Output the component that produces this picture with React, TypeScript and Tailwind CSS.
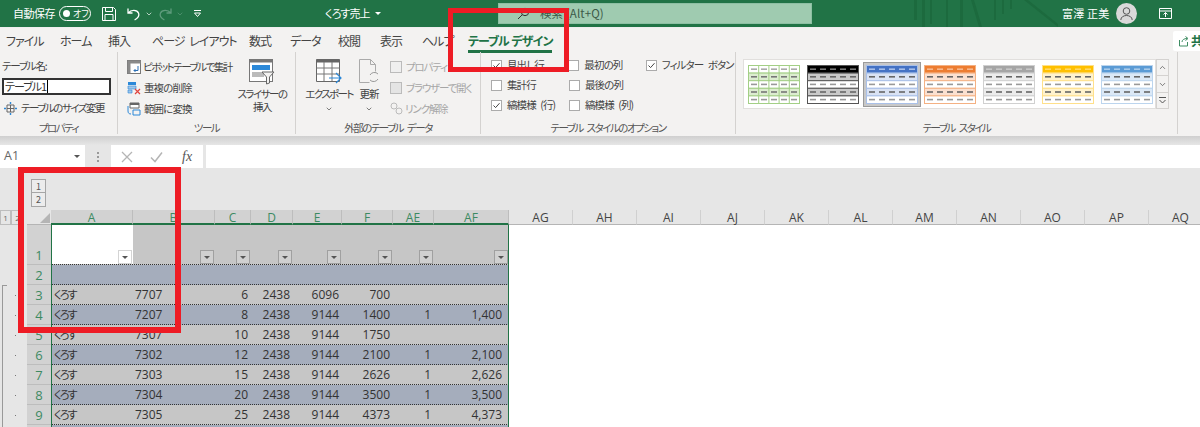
import { ChevronDown, ChevronUp } from "lucide-react";

const tabs: [string, number][] = [
  ["ファイル", 54],
  ["ホーム", 48],
  ["挿入", 44],
  ["ページ レイアウト", 97],
  ["数式", 41],
  ["データ", 48],
  ["校閲", 42],
  ["表示", 42],
  ["ヘルプ", 46],
];

const columns: [string, number][] = [
  ["A", 82],
  ["B", 82],
  ["C", 36],
  ["D", 42],
  ["E", 49],
  ["F", 51],
  ["AE", 41],
  ["AF", 75],
];

const emptyCols = ["AG", "AH", "AI", "AJ", "AK", "AL", "AM", "AN", "AO", "AP", "AQ"];

const rows = [
  ["くろす", "7707", "6", "2438", "6096", "700", "", ""],
  ["くろす", "7207", "8", "2438", "9144", "1400", "1", "1,400"],
  ["くろす", "7307", "10", "2438", "9144", "1750", "", ""],
  ["くろす", "7302", "12", "2438", "9144", "2100", "1", "2,100"],
  ["くろす", "7303", "15", "2438", "9144", "2626", "1", "2,626"],
  ["くろす", "7304", "20", "2438", "9144", "3500", "1", "3,500"],
  ["くろす", "7305", "25", "2438", "9144", "4373", "1", "4,373"],
];

const styles = [
  { head: "#ffffff", a: "#dcecd0", b: "#ffffff", line: "#a3cf86", dash: "#777777", headDash: "#aaaaaa", grid: true },
  { head: "#000000", a: "#c9c9c9", b: "#ffffff", line: "#555555", dash: "#666666", headDash: "#777777" },
  { head: "#4472c4", a: "#d9e2f3", b: "#ffffff", line: "#a9c0e8", dash: "#666666", headDash: "#a8bfe8" },
  { head: "#ed7d31", a: "#fbe0d0", b: "#ffffff", line: "#f4b183", dash: "#666666", headDash: "#f6b88e" },
  { head: "#a5a5a5", a: "#ececec", b: "#ffffff", line: "#d0d0d0", dash: "#666666", headDash: "#c8c8c8" },
  { head: "#ffc000", a: "#fff2cc", b: "#ffffff", line: "#ffe08a", dash: "#666666", headDash: "#ffd966" },
  { head: "#5b9bd5", a: "#dbe8f6", b: "#ffffff", line: "#bcd5ee", dash: "#666666", headDash: "#a9cbea" },
];

function StyleThumb({ s }: { s: (typeof styles)[number] }) {
  return (
    <svg width="52" height="39" viewBox="0 0 52 39" className="shrink-0">
      {[0, 1, 2, 3, 4].map((r) => (
        <g key={r}>
          <rect
            x="0.5"
            y={0.5 + r * 7.6}
            width="51"
            height="7.6"
            fill={r === 0 ? s.head : r % 2 ? s.a : s.b}
            stroke={s.line}
          />
          {[0, 1, 2, 3, 4].map((c) => (
            <rect
              key={c}
              x={3 + c * 10}
              y={3.4 + r * 7.6}
              width="6"
              height="1.6"
              fill={r === 0 ? s.headDash : r % 2 ? s.dash : "#999999"}
            />
          ))}
        </g>
      ))}
      {s.grid &&
        [1, 2, 3, 4].map((c) => (
          <path key={c} d={`M${0.5 + c * 10.2} 0v38.5`} stroke={s.line} fill="none" />
        ))}
    </svg>
  );
}

function Check({ on, label, w }: { on?: boolean; label: string; w: string }) {
  return (
    <div className={`flex h-[20px] items-center gap-[5px] ${w}`}>
      <span className="flex h-[11px] w-[11px] shrink-0 items-center justify-center border border-[#ababab] bg-white">
        {on && (
          <svg width="9" height="9" viewBox="0 0 9 9">
            <path d="M1.5 4.500 3.600 6.600 7.500 2.200" fill="none" stroke="#444" strokeWidth="1" />
          </svg>
        )}
      </span>
      <span className="whitespace-nowrap">{label}</span>
    </div>
  );
}

function GroupLabel({ children }: { children: React.ReactNode }) {
  return (
    <div className="absolute bottom-[-1px] left-0 right-0 whitespace-nowrap text-center leading-[14px] tracking-[-1.500px] text-[#555]">
      {children}
    </div>
  );
}

function FilterButton({ light }: { light?: boolean }) {
  return (
    <span
      className={`flex h-[14px] w-[14px] items-center justify-center border ${
        light ? "border-[#d4d4d4] bg-white" : "border-[#a0a0a0] bg-[#d0d0d0]"
      }`}
    >
      <span className="h-0 w-0 border-x-[3px] border-t-[3px] border-x-transparent border-t-[#555]" />
    </span>
  );
}

export default function App() {
  return (
    <div className="relative h-[427px] w-[1200px] overflow-hidden bg-white font-['Noto_Sans_CJK_JP','Noto_Sans',sans-serif] text-[11px] text-[#444] [font-feature-settings:'palt']">
      {/* title bar */}
      <div className="relative flex h-[27px] items-center bg-[#217346] text-[12px] text-white">
        <span className="ml-[13px] w-[45px] whitespace-nowrap text-[11px] tracking-[-.5px]">自動保存</span>
        <span className="ml-[1px] flex h-[15px] w-[32px] items-center rounded-full border border-white pl-[3px]">
          <span className="h-[7px] w-[7px] rounded-full bg-white" />
          <span className="ml-[3px] text-[9px] leading-none">オフ</span>
        </span>
        <svg width="16" height="16" viewBox="0 0 16 16" className="ml-[10px]" fill="none" stroke="#fff">
          <path d="M1.500 1.500h11l2 2v11h-13zM4.500 1.500v4h7v-4M4 14.500v-6h8v6" />
        </svg>
        <svg width="16" height="16" viewBox="0 0 16 16" className="ml-[9px]" fill="none" stroke="#fff" strokeWidth="1.300">
          <path d="M2 2.500v4.500h4.500M2.300 7C5 3.500 11 3.500 12.600 7.300c1 2.700-.8 5-4 6.700" />
        </svg>
        <ChevronDown size={8} className="ml-[3px]" />
        <svg width="16" height="16" viewBox="0 0 16 16" className="ml-[4px]" fill="none" stroke="#5f9c7d" strokeWidth="1.300">
          <path d="M14 2.500v4.500H9.500M13.700 7C11 3.500 5 3.500 3.400 7.300c-1 2.700.8 5 4 6.700" />
        </svg>
        <ChevronDown size={8} className="ml-[3px] text-[#5f9c7d]" />
        <svg width="9" height="9" viewBox="0 0 9 9" className="ml-[9px]" fill="none" stroke="#fff">
          <path d="M1 1.500h7M1.500 4h6L4.500 7.500z" />
        </svg>
        <span className="ml-[123px] w-[41px] whitespace-nowrap text-[11px] tracking-[-.9px]">くろす売上</span>
        <span className="ml-[9px] h-0 w-0 border-x-[3px] border-t-[3px] border-x-transparent border-t-white" />
        <div className="ml-[117px] flex h-[21px] w-[314px] items-center border border-[#8dbfa3] bg-[#9fcbb0] pl-[18px] text-[11.500px] text-[#3c5a48]">
          <svg width="13" height="13" viewBox="0 0 13 13" fill="none" stroke="#333" className="shrink-0">
            <circle cx="8" cy="5" r="3.700" />
            <path d="M5.300 7.700 1 12" />
          </svg>
          <span className="ml-[10px] whitespace-nowrap tracking-[.1px]">検索 (Alt+Q)</span>
        </div>
        <svg width="150" height="27" viewBox="0 0 150 27" className="absolute left-[910px] top-0" fill="#1c6a3e">
          <path d="M4 0h3v20H4zM12 0h3v27h-3zM20 0h2v24h-2zM36 0h2v27h-2zM50 0h3v27h-3zM64 0l8 27h-3L61 0zM84 0h2v20h-2zM92 0h2v14h-2zM100 0h2v9h-2zM118 0l30 24v3L114 0z" />
        </svg>
        <span className="relative ml-[250px] w-[46px] whitespace-nowrap text-[11px] tracking-[.2px]">富澤 正美</span>
        <span className="relative ml-[8px] flex h-[21px] w-[21px] items-center justify-center rounded-full bg-[#d9d9d9]">
          <svg width="15" height="15" viewBox="0 0 15 15" fill="none" stroke="#555">
            <circle cx="7.500" cy="5" r="3.300" />
            <path d="M1.800 14c0-6 11.400-6 11.400 0" />
          </svg>
        </span>
        <svg width="13" height="11" viewBox="0 0 13 11" className="relative ml-[22px]" fill="none" stroke="#fff">
          <path d="M.5.500h12v10H.5zM.5 3h12" />
          <path d="M6.500 9V4.500M4.500 6.500l2-2 2 2" />
        </svg>
      </div>

      {/* tab row */}
      <div className="relative flex h-[25px] items-center border-t border-[#eee] bg-[#f3f2f1] text-[12px] tracking-[-1px] text-[#444] [word-spacing:3px]">
        {tabs.map(([name, w]) => (
          <span key={name} style={{ width: w }} className="whitespace-nowrap pl-[6px] pt-[2px]">
            {name}
          </span>
        ))}
        <span className="relative ml-[6px] flex h-[25px] flex-col items-center justify-center whitespace-nowrap pt-[2px] text-[12px] font-bold text-[#217346] [word-spacing:1px]">
          テーブル デザイン
          <span className="absolute bottom-0 left-0 right-0 h-[2.500px] bg-[#217346]" />
        </span>
        <span className="absolute right-0 top-[3px] flex h-[20px] w-[27px] items-center gap-[2px] overflow-hidden rounded-l-[2px] bg-white pl-[6px] font-bold whitespace-nowrap text-[#217346]">
          <svg width="10" height="11" viewBox="0 0 10 11" className="shrink-0" fill="none" stroke="#3f8d63">
            <path d="M.5 4v6h8V6M3 6c0-2 2-3.500 5-3.500M6.500.5 9 2.500 6.500 4.500" />
          </svg>
          共有
        </span>
      </div>

      {/* ribbon */}
      <div className="flex h-[84px] bg-[#f3f2f1] pb-[2px] text-[10.500px] leading-[14px] tracking-[-.9px] text-[#444] [word-spacing:3px]">
        {/* プロパティ */}
        <div className="relative w-[118px] shrink-0 border-r border-[#d4d2d0] pl-[2px] pt-[7px]">
          <div className="tracking-[-1.200px]">テーブル名:</div>
          <div className="mt-[5px] flex h-[17px] w-[109px] items-center border-2 border-[#333] bg-white pl-[1px] text-[11px] leading-none tracking-[-1px] text-[#333]">
            テーブル1<span className="ml-[1px] h-[13px] w-px bg-black" />
          </div>
          <div className="mt-[6px] flex items-center gap-[4px] pl-[2px]">
            <svg width="13" height="13" viewBox="0 0 13 13" fill="none" stroke="#666" className="shrink-0">
              <path d="M3 3h7v7H3zM3 6.500h7M6.500 3v7" />
              <path d="M6.500 0v2M6.500 11v2M0 6.500h2M11 6.500h2" stroke="#2b88d8" strokeWidth="1.400" />
            </svg>
            <span className="whitespace-nowrap tracking-[-1.500px]">テーブルのサイズ変更</span>
          </div>
          <GroupLabel>プロパティ</GroupLabel>
        </div>

        {/* ツール */}
        <div className="relative flex w-[178px] shrink-0 border-r border-[#d4d2d0] pl-[9px] pt-[7px]">
          <div className="flex w-[110px] flex-col gap-[6px]">
            <div className="flex h-[15px] items-center gap-[2px] whitespace-nowrap tracking-[-1.500px]">
              <svg width="14" height="14" viewBox="0 0 14 14" className="shrink-0">
                <rect x=".5" y=".5" width="13" height="13" fill="#fff" stroke="#777" />
                <path d="M.5.500h13v3H.5zM.5.500h3v13h-3z" fill="#8a8a8a" />
                <path d="M11 6v4.500H7M8.500 9 7 10.500 8.500 12" fill="none" stroke="#2b6fb5" />
              </svg>
              ピボットテーブルで集計
            </div>
            <div className="flex h-[15px] items-center gap-[3px] whitespace-nowrap">
              <svg width="14" height="14" viewBox="0 0 14 14" className="shrink-0">
                <path d="M1 1h8v3H1z" fill="#2b88d8" />
                <path d="M1 5h8v3H1zM1 9h4v3H1z" fill="#9ec7ea" stroke="#2b88d8" strokeWidth=".6" />
                <path d="M8 8l5 5M13 8l-5 5" stroke="#e0443e" strokeWidth="1.200" />
              </svg>
              重複の削除
            </div>
            <div className="flex h-[15px] items-center gap-[3px] whitespace-nowrap">
              <svg width="14" height="14" viewBox="0 0 14 14" fill="none" className="shrink-0">
                <path d="M3 1h9v5H3z" fill="#fff" stroke="#666" />
                <path d="M3 1h9v2H3z" fill="#666" />
                <path d="M6 8h7v5H6z" stroke="#2b88d8" />
                <path d="M1 4v5c0 2 1 3 3 3" stroke="#2b88d8" />
              </svg>
              範囲に変換
            </div>
          </div>
          <div className="flex w-[50px] flex-col items-center">
            <svg width="26" height="26" viewBox="0 0 26 26" className="shrink-0">
              <rect x=".5" y=".5" width="23" height="22" fill="#fff" stroke="#777" />
              <path d="M.5.500h23v3H.5z" fill="#777" />
              <rect x="3" y="6" width="18" height="5" fill="#2b88d8" />
              <rect x="3" y="13" width="12" height="5" fill="#bbb" />
              <path d="M13 13h12l-4.500 5v6l-3 1v-7z" fill="#f3f2f1" stroke="#666" />
            </svg>
            <div className="mt-[2px] whitespace-nowrap text-center leading-[13px] tracking-[-1.500px]">
              スライサーの
              <br />
              挿入
            </div>
          </div>
          <GroupLabel>ツール</GroupLabel>
        </div>

        {/* 外部のテーブル データ */}
        <div className="relative flex w-[185px] shrink-0 border-r border-[#d4d2d0] pl-[7px] pt-[7px]">
          <div className="flex w-[52px] flex-col items-center">
            <svg width="26" height="25" viewBox="0 0 26 25" fill="none" className="shrink-0">
              <path d="M.5.500h23v22H.5z" fill="#fff" stroke="#666" />
              <path d="M.5.500h23v3H.5z" fill="#666" />
              <path d="M.5 9h23M.5 15h23M8 3v19M16 3v19" stroke="#777" />
              <path d="M13 19h12M20 14l5 5-5 5" stroke="#2b88d8" strokeWidth="1.200" />
            </svg>
            <div className="mt-[3px] whitespace-nowrap leading-[13px] tracking-[-1.600px]">エクスポート</div>
            <ChevronDown size={8} className="mt-[5px]" />
          </div>
          <div className="ml-[1px] flex w-[26px] flex-col items-center">
            <svg width="24" height="25" viewBox="0 0 24 25" fill="none" stroke="#aaa" className="shrink-0">
              <path d="M2.500.5h11l5 5v7M13.500.5v5h5M2.500.5v23h10" />
              <path d="M21 15a5 5 0 0 0-8 1M13 21a5 5 0 0 0 8-1" stroke="#999" />
            </svg>
            <div className="mt-[3px] whitespace-nowrap leading-[13px]">更新</div>
            <ChevronDown size={8} className="mt-[5px]" />
          </div>
          <div className="ml-[8px] flex flex-col gap-[6px] whitespace-nowrap tracking-[-1.200px] text-[#a6a6a6]">
            <div className="flex h-[15px] items-center gap-[4px]">
              <span className="h-[12px] w-[12px] border border-[#bbb] bg-[#efefef]" />
              プロパティ
            </div>
            <div className="flex h-[15px] items-center gap-[4px]">
              <span className="h-[12px] w-[12px] border border-[#bbb] bg-[#e4e4e4]" />
              ブラウザーで開く
            </div>
            <div className="flex h-[15px] items-center gap-[2px]">
              <svg width="13" height="13" viewBox="0 0 13 13" fill="none" stroke="#bbb">
                <circle cx="4" cy="4" r="3" />
                <circle cx="9" cy="9" r="3" />
              </svg>
              リンク解除
            </div>
          </div>
          <GroupLabel>外部のテーブル データ</GroupLabel>
        </div>

        {/* テーブル スタイルのオプション */}
        <div className="relative w-[255px] shrink-0 border-r border-[#d4d2d0] pl-[10px] pt-[3px]">
          <div className="flex">
            <Check on label="見出し行" w="w-[78px]" />
            <Check label="最初の列" w="w-[78px]" />
            <Check on label="フィルター ボタン" w="w-[90px]" />
          </div>
          <div className="flex">
            <Check label="集計行" w="w-[78px]" />
            <Check label="最後の列" w="w-[78px]" />
          </div>
          <div className="flex">
            <Check on label="縞模様 (行)" w="w-[78px]" />
            <Check label="縞模様 (列)" w="w-[78px]" />
          </div>
          <GroupLabel>テーブル スタイルのオプション</GroupLabel>
        </div>

        {/* テーブル スタイル */}
        <div className="relative w-[442px] shrink-0 border-r border-[#d4d2d0] pl-[7px] pt-[7px]">
          <div className="flex h-[50px] w-[426px]">
            <div className="flex h-[50px] w-[413px] items-center gap-[6.800px] border border-[#e1dfdd] bg-white pl-[4px]">
              {styles.map((s, i) =>
                i === 2 ? (
                  <span
                    key={s.head}
                    className="mx-[-3px] flex h-[45px] w-[58px] shrink-0 items-center justify-center border border-[#9a9a9a] bg-[#c8c8c8]"
                  >
                    <StyleThumb s={s} />
                  </span>
                ) : (
                  <StyleThumb key={s.head + i} s={s} />
                ),
              )}
            </div>
            <div className="flex w-[13px] flex-col text-[#555]">
              <span className="flex h-[17px] items-center justify-center border border-[#d4d2d0] bg-[#f3f2f1]">
                <ChevronUp size={9} />
              </span>
              <span className="flex h-[16px] items-center justify-center border-x border-[#d4d2d0] bg-[#f3f2f1]">
                <ChevronDown size={9} />
              </span>
              <span className="flex h-[17px] items-center justify-center border border-[#d4d2d0] bg-[#f3f2f1]">
                <svg width="9" height="9" viewBox="0 0 9 9" fill="none" stroke="#555">
                  <path d="M1 1.500h7M1.500 4 4.500 7 7.500 4" />
                </svg>
              </span>
            </div>
          </div>
          <GroupLabel>テーブル スタイル</GroupLabel>
        </div>
      </div>

      {/* ribbon shadow + formula bar */}
      <div className="h-[9px] bg-gradient-to-b from-[#cfcfcf] to-[#e6e6e6]" />
      <div className="flex h-[23px] items-stretch bg-[#e6e6e6] text-[#666]">
        <div className="flex w-[85px] items-center justify-between bg-white pl-[4px] pr-[5px] font-['Open_Sans',sans-serif] text-[12.500px]">
          A1
          <span className="h-0 w-0 border-x-[3px] border-t-[3px] border-x-transparent border-t-[#555]" />
        </div>
        <div className="flex w-[26px] flex-col items-center justify-center gap-[2px]">
          <span className="h-[2px] w-[2px] bg-[#999]" />
          <span className="h-[2px] w-[2px] bg-[#999]" />
          <span className="h-[2px] w-[2px] bg-[#999]" />
        </div>
        <div className="flex w-[92px] items-center bg-white pl-[10px]">
          <svg width="12" height="12" viewBox="0 0 12 12" stroke="#b5b5b5" strokeWidth="1.300" fill="none">
            <path d="M1 1l10 10M11 1 1 11" />
          </svg>
          <svg width="13" height="12" viewBox="0 0 13 12" stroke="#b5b5b5" strokeWidth="1.500" fill="none" className="ml-[17px]">
            <path d="M1 6.500 5 10.500 12 1.500" />
          </svg>
          <span className="ml-[19px] font-['Liberation_Serif',serif] text-[14px] italic leading-none text-[#555]">
            fx
          </span>
        </div>
        <div className="ml-[3px] flex-1 bg-white" />
      </div>

      {/* outline level buttons */}
      <div className="flex h-[42px] flex-col bg-[#e6e6e6] pl-[31px] pt-[11px] text-[9px] leading-none text-[#555]">
        <span className="flex h-[14px] w-[15px] items-center justify-center border border-[#a6a6a6] bg-[#ececec]">1</span>
        <span className="mt-[-1px] flex h-[15px] w-[15px] items-center justify-center border border-[#a6a6a6] bg-[#ececec]">2</span>
      </div>

      {/* column headers */}
      <div className="flex h-[15px] bg-[#e6e6e6] font-['Open_Sans',sans-serif] text-[12px] leading-[15px]">
        <div className="flex w-[27px] shrink-0 items-stretch text-[8px] text-[#666]">
          <span className="flex w-[11px] items-center justify-center border border-[#bdbdbd]">1</span>
          <span className="flex w-[13px] items-center justify-center border border-[#bdbdbd]">2</span>
        </div>
        <div className="flex w-[24px] shrink-0 items-end justify-end border-b border-[#b5b5b5] pb-[1px] pr-[1px]">
          <span className="h-0 w-0 border-b-[10px] border-l-[10px] border-b-[#b5b5b5] border-l-transparent" />
        </div>
        {columns.map(([c, w]) => (
          <div
            key={c}
            style={{ width: w }}
            className="shrink-0 border-b-2 border-r border-b-[#217346] border-r-[#bdbdbd] bg-[#d2d2d2] text-center text-[#3d8a62]"
          >
            {c}
          </div>
        ))}
        {emptyCols.map((c) => (
          <div
            key={c}
            className="w-[64px] shrink-0 border-b border-r border-b-[#b5b5b5] border-r-[#d0d0d0] text-center text-[#444]"
          >
            {c}
          </div>
        ))}
      </div>

      {/* sheet */}
      <div className="relative flex">
        {/* outline gutter */}
        <div className="relative w-[27px] shrink-0 bg-[#e6e6e6]">
          <div className="h-[60px]" />
          <div className="ml-[2px] h-[5px] w-[5px] border-l border-t border-[#999]" />
          {rows.map((_, i) => (
            <div key={i} className="relative h-[20px]">
              <span className="absolute left-[15px] top-[5px] h-px w-px bg-[#777]" />
            </div>
          ))}
          <div className="absolute bottom-0 left-[2px] top-[65px] w-px bg-[#999]" />
        </div>
        {/* row headers */}
        <div className="w-[24px] shrink-0 bg-[#d2d2d2] text-center font-['Open_Sans',sans-serif] text-[13px] text-[#3d8a62]">
          <div className="flex h-[40px] items-end justify-center border-b border-[#bdbdbd] leading-[17px]">1</div>
          {[2, 3, 4, 5, 6, 7, 8, 9].map((n) => (
            <div key={n} className="h-[20px] border-b border-[#bdbdbd] leading-[21px]">
              {n}
            </div>
          ))}
        </div>
        {/* table */}
        <div className="relative w-[458px] shrink-0 font-['Open_Sans','Noto_Sans_CJK_JP',sans-serif] text-[12px] leading-[19px] text-[#333]">
          <div className="flex h-[40px] border-b border-dotted border-[#333] bg-[#c6c6c6]">
            {columns.map(([c, w], i) => (
              <div
                key={c}
                style={{ width: w }}
                className={`flex shrink-0 items-end justify-end pr-[1px] ${i === 0 ? "bg-white" : ""}`}
              >
                <FilterButton light={i === 0} />
              </div>
            ))}
          </div>
          <div className="h-[20px] border-b border-dotted border-[#333] bg-[#a5adbc]" />
          {rows.map((r, i) => (
            <div
              key={i}
              className={`flex h-[20px] border-b border-dotted border-[#333] ${i % 2 ? "bg-[#a5adbc]" : "bg-[#c6c6c6]"}`}
            >
              {columns.map(([c, w], j) => (
                <div
                  key={c}
                  style={{ width: w }}
                  className={`shrink-0 whitespace-nowrap ${
                    j === 0
                      ? "pl-[3px] text-[11px] tracking-[-1.800px]"
                      : j === 1
                        ? "pl-[2px]"
                        : j === 7
                          ? "pr-[7px] text-right"
                          : "pr-[3px] text-right"
                  }`}
                >
                  {r[j]}
                </div>
              ))}
            </div>
          ))}
          <div className="h-[20px] bg-[#a5adbc]" />
          {/* selection edge of the table range */}
          <div className="pointer-events-none absolute inset-0 border-x-[1.500px] border-[#217346]" />
        </div>
      </div>

      {/* red annotation frames */}
      <div className="pointer-events-none absolute left-[448px] top-[8px] h-[64px] w-[121px] border-[5px] border-[#ee1c25]" />
      <div className="pointer-events-none absolute left-[18px] top-[167px] h-[166px] w-[163px] border-[6px] border-[#ee1c25]" />
    </div>
  );
}
